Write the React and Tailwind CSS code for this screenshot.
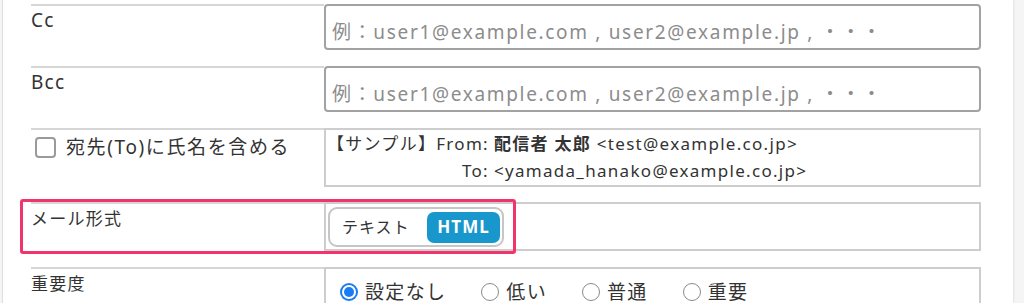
import React from "react";

const font = { fontFamily: '"Noto Sans", "Noto Sans CJK JP", sans-serif' };

function Row({ label, children, className = "" }) {
  return (
    <div className={"flex " + className}>
      <div className="w-[293px] border-t-2 border-[#d6d6d6] pt-[1px] text-[19px] leading-[26px] tracking-[0.065em] text-[#333]">
        {label}
      </div>
      <div className="flex-1">{children}</div>
    </div>
  );
}

function Radio({ checked, label }) {
  return (
    <label className="flex items-center gap-[7px]">
      {checked ? (
        <span className="flex h-[18px] w-[18px] items-center justify-center rounded-full bg-[#1a7cf2]">
          <span className="flex h-[14px] w-[14px] items-center justify-center rounded-full bg-white">
            <span className="h-[10px] w-[10px] rounded-full bg-[#1a7cf2]" />
          </span>
        </span>
      ) : (
        <span className="h-[18px] w-[18px] rounded-full border border-[#8a8a8a] bg-white" />
      )}
      <span className="text-[19px] leading-[30px] tracking-[0.07em] text-[#333]">{label}</span>
    </label>
  );
}

export default function App() {
  const placeholder = "例：user1@example.com , user2@example.jp , ・・・";
  const inputCls =
    "h-[46px] w-full rounded-[4px] border-2 border-[#a2a2a2] px-[6px] pt-[9px] text-[19px] tracking-[0.088em] text-[#333] placeholder:text-[#8c8c8c] focus:outline-none";

  return (
    <div className="h-[303px] overflow-hidden bg-[#f5f5f5]" style={font}>
      <div className="relative ml-[2px] h-full w-[1011px] border-l border-[#dedede] bg-white pl-[28px] pr-[32px] pt-[4px] shadow-[1px_0_2px_rgba(0,0,0,0.08)]">
        <Row label="Cc" className="mb-[16px]">
          <input placeholder={placeholder} className={inputCls} />
        </Row>

        <Row label="Bcc" className="mb-[16px]">
          <input placeholder={placeholder} className={inputCls} />
        </Row>

        <Row
          className="mb-[15px]"
          label={
            <div className="flex items-center gap-[10px] pl-[4px] pt-[3px]">
              <span className="h-[21px] w-[21px] rounded-[4px] border-2 border-[#9a9a9a] bg-white" />
              <span className="text-[19px] tracking-[0.085em]">宛先(To)に氏名を含める</span>
            </div>
          }
        >
          <div className="h-[59px] border-2 border-[#cdcdcd] pl-[1px] text-[17px] leading-[27px] tracking-[0.076em] text-[#333]">
            <div className="grid grid-cols-[auto_1fr] gap-x-[5px]">
              <span className="text-right">【サンプル】From:</span>
              <span>
                <b className="font-bold">配信者 太郎</b> &lt;test@example.co.jp&gt;
              </span>
              <span className="text-right">To:</span>
              <span>&lt;yamada_hanako@example.co.jp&gt;</span>
            </div>
          </div>
        </Row>

        <Row label={<span className="text-[17px]">メール形式</span>} className="mb-[16px]">
          <div className="h-[49px] border-2 border-[#cdcdcd] pl-[2px] pt-[3px]">
            <div className="flex h-[40px] w-[176px] items-center justify-between rounded-[9px] border-2 border-[#c6c6c6] pl-[12px] pr-[2px] tracking-[0.065em]">
              <span className="text-[16px] text-[#333]">テキスト</span>
              <span className="flex h-[31px] w-[73px] items-center justify-center rounded-[7px] bg-[#1797cc] text-[17px] font-bold text-white">
                HTML
              </span>
            </div>
          </div>
        </Row>

        <Row label={<span className="text-[17px]">重要度</span>}>
          <div className="h-[60px] border-2 border-[#cdcdcd] pl-[14px] pt-[8px]">
            <div className="flex items-center gap-[35px]">
              <Radio checked label="設定なし" />
              <Radio label="低い" />
              <Radio label="普通" />
              <Radio label="重要" />
            </div>
          </div>
        </Row>

        {/* 注釈の枠 */}
        <div className="absolute left-[17px] top-[199px] h-[55px] w-[496px] rounded-[3px] border-[3px] border-[#f2346c]" />
      </div>
    </div>
  );
}
